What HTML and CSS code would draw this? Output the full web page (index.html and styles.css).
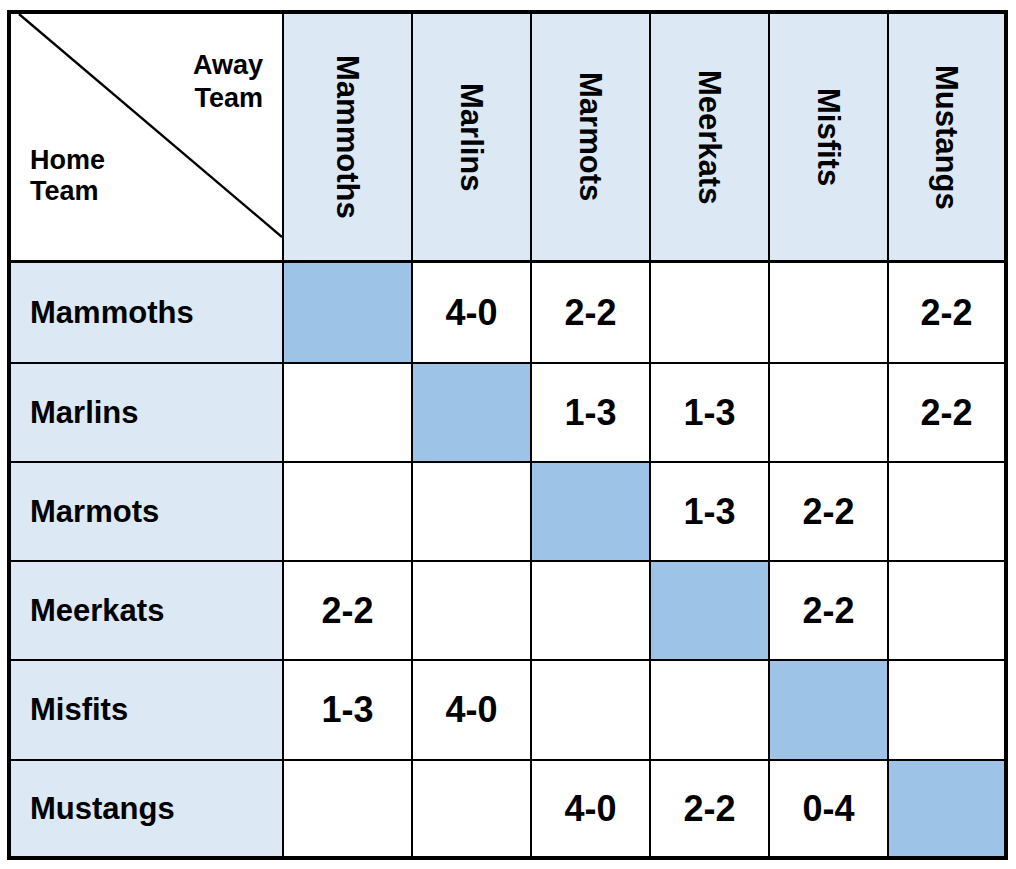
FILE: index.html
```html
<!DOCTYPE html>
<html>
<head>
<meta charset="utf-8">
<link rel="stylesheet" href="styles.css">
</head>
<body>
<div class="table">
  <div class="corner">
    <svg class="diag" width="271" height="246" viewBox="0 0 271 246"><line x1="8" y1="0" x2="271" y2="223" stroke="#000" stroke-width="2.4"/></svg>
    <div class="away">Away<br>Team</div>
    <div class="home">Home<br>Team</div>
  </div>
  <div class="colhead"><span>Mammoths</span></div>
  <div class="colhead"><span>Marlins</span></div>
  <div class="colhead"><span>Marmots</span></div>
  <div class="colhead"><span>Meerkats</span></div>
  <div class="colhead"><span>Misfits</span></div>
  <div class="colhead"><span>Mustangs</span></div>

  <div class="rowhead">Mammoths</div>
  <div class="cell self"></div>
  <div class="cell">4-0</div>
  <div class="cell">2-2</div>
  <div class="cell"></div>
  <div class="cell"></div>
  <div class="cell">2-2</div>

  <div class="rowhead">Marlins</div>
  <div class="cell"></div>
  <div class="cell self"></div>
  <div class="cell">1-3</div>
  <div class="cell">1-3</div>
  <div class="cell"></div>
  <div class="cell">2-2</div>

  <div class="rowhead">Marmots</div>
  <div class="cell"></div>
  <div class="cell"></div>
  <div class="cell self"></div>
  <div class="cell">1-3</div>
  <div class="cell">2-2</div>
  <div class="cell"></div>

  <div class="rowhead">Meerkats</div>
  <div class="cell">2-2</div>
  <div class="cell"></div>
  <div class="cell"></div>
  <div class="cell self"></div>
  <div class="cell">2-2</div>
  <div class="cell"></div>

  <div class="rowhead">Misfits</div>
  <div class="cell">1-3</div>
  <div class="cell">4-0</div>
  <div class="cell"></div>
  <div class="cell"></div>
  <div class="cell self"></div>
  <div class="cell"></div>

  <div class="rowhead">Mustangs</div>
  <div class="cell"></div>
  <div class="cell"></div>
  <div class="cell">4-0</div>
  <div class="cell">2-2</div>
  <div class="cell">0-4</div>
  <div class="cell self"></div>
</div>
</body>
</html>
```
FILE: styles.css
```css
html, body {
  margin: 0;
  padding: 0;
  background: #ffffff;
}
body {
  padding: 10px 0 0 7px;
  font-family: "Liberation Sans", Arial, sans-serif;
  font-weight: bold;
  color: #000;
}
.table {
  display: grid;
  width: 993px;
  grid-template-columns: 271px 127px 117px 117px 117px 117px 115px;
  grid-template-rows: 247px 99px 97px 97px 97px 98px 95px;
  gap: 2px;
  background: #000;
  border: 4px solid #000;
}
.corner {
  position: relative;
  background: #fff;
  margin-bottom: 1px;
}
.diag {
  position: absolute;
  left: 0;
  top: 0;
}
.away {
  position: absolute;
  right: 19px;
  top: 35px;
  text-align: right;
  font-size: 27px;
  line-height: 33px;
}
.home {
  position: absolute;
  left: 19px;
  top: 131px;
  font-size: 27px;
  line-height: 31px;
}
.colhead {
  background: #dde8f5;
  margin-bottom: 1px;
  display: flex;
  align-items: center;
  justify-content: center;
}
.colhead span {
  writing-mode: vertical-rl;
  font-size: 31px;
  line-height: 1;
}
.rowhead {
  background: #dde8f5;
  display: flex;
  align-items: center;
  padding-left: 19px;
  font-size: 31px;
}
.cell {
  background: #fff;
  display: flex;
  align-items: center;
  justify-content: center;
  font-size: 36px;
}
.self {
  background: #9dc3e6;
}
```
